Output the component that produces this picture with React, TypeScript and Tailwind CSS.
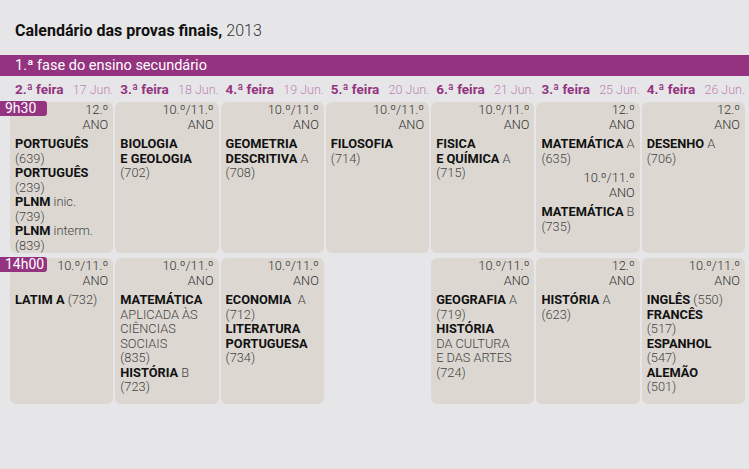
import React from "react"

type Seg = [string, boolean]
type Block = { year: string; lines: Seg[][] }
type Card = Block[] | null

const B = (t: string): Seg => [t, true]
const L = (t: string): Seg => [t, false]

const days = [
  ["2.ª feira", "17 Jun."],
  ["3.ª feira", "18 Jun."],
  ["4.ª feira", "19 Jun."],
  ["5.ª feira", "20 Jun."],
  ["6.ª feira", "21 Jun."],
  ["3.ª feira", "25 Jun."],
  ["4.ª feira", "26 Jun."],
]

const morning: Card[] = [
  [
    {
      year: "12.º",
      lines: [
        [B("PORTUGUÊS")],
        [L("(639)")],
        [B("PORTUGUÊS")],
        [L("(239)")],
        [B("PLNM"), L(" inic.")],
        [L("(739)")],
        [B("PLNM"), L(" interm.")],
        [L("(839)")],
      ],
    },
  ],
  [{ year: "10.º/11.º", lines: [[B("BIOLOGIA")], [B("E GEOLOGIA")], [L("(702)")]] }],
  [{ year: "10.º/11.º", lines: [[B("GEOMETRIA")], [B("DESCRITIVA"), L(" A")], [L("(708)")]] }],
  [{ year: "10.º/11.º", lines: [[B("FILOSOFIA")], [L("(714)")]] }],
  [{ year: "10.º/11.º", lines: [[B("FISICA")], [B("E QUÍMICA"), L(" A")], [L("(715)")]] }],
  [
    { year: "12.º", lines: [[B("MATEMÁTICA"), L(" A")], [L("(635)")]] },
    { year: "10.º/11.º", lines: [[B("MATEMÁTICA"), L(" B")], [L("(735)")]] },
  ],
  [{ year: "12.º", lines: [[B("DESENHO"), L(" A")], [L("(706)")]] }],
]

const afternoon: Card[] = [
  [{ year: "10.º/11.º", lines: [[B("LATIM A"), L(" (732)")]] }],
  [
    {
      year: "10.º/11.º",
      lines: [
        [B("MATEMÁTICA")],
        [L("APLICADA ÀS")],
        [L("CIÊNCIAS")],
        [L("SOCIAIS")],
        [L("(835)")],
        [B("HISTÓRIA"), L(" B")],
        [L("(723)")],
      ],
    },
  ],
  [
    {
      year: "10.º/11.º",
      lines: [[B("ECONOMIA"), L("\u00a0 A")], [L("(712)")], [B("LITERATURA")], [B("PORTUGUESA")], [L("(734)")]],
    },
  ],
  null,
  [
    {
      year: "10.º/11.º",
      lines: [
        [B("GEOGRAFIA"), L(" A")],
        [L("(719)")],
        [B("HISTÓRIA")],
        [L("DA CULTURA")],
        [L("E DAS ARTES")],
        [L("(724)")],
      ],
    },
  ],
  [{ year: "12.º", lines: [[B("HISTÓRIA"), L(" A")], [L("(623)")]] }],
  [
    {
      year: "10.º/11.º",
      lines: [
        [B("INGLÊS"), L(" (550)")],
        [B("FRANCÊS")],
        [L("(517)")],
        [B("ESPANHOL")],
        [L("(547)")],
        [B("ALEMÃO")],
        [L("(501)")],
      ],
    },
  ],
]

const ExamCard = ({ card }: { card: Card }) => {
  if (!card) return <div />
  return (
    <div className="rounded-[6px] bg-[#dcd8d1] px-[5px] pt-px text-[12.8px] leading-[14.5px]">
      {card.map((block, i) => (
        <div key={i} className={i > 0 ? "mt-[5px]" : ""}>
          <div className="text-right font-light text-[#333]">
            {block.year}
            <br />
            ANO
          </div>
          <div className="mt-[5px]">
            {block.lines.map((line, j) => (
              <div key={j} className="whitespace-pre">
                {line.map(([t, bold], k) => (
                  <span key={k} className={bold ? "font-bold text-[#111]" : "font-light text-[#444]"}>
                    {t}
                  </span>
                ))}
              </div>
            ))}
          </div>
        </div>
      ))}
    </div>
  )
}

const Session = ({ time, cards, height }: { time: string; cards: Card[]; height: string }) => (
  <div className="relative pl-[10px] pr-[4px]">
    <div className={`grid grid-cols-7 gap-[2px] ${height}`}>
      {cards.map((c, i) => (
        <ExamCard key={i} card={c} />
      ))}
    </div>
    <div className="absolute left-0 top-[-1px] h-[15px] w-[47px] rounded-r-[3px] bg-[#94337f] pl-[5px] text-[14px] leading-[15px] text-white">
      {time}
    </div>
  </div>
)

export default function App() {
  return (
    <div className="h-[469px] w-[749px] overflow-hidden bg-[#e6e6e8] font-['Roboto',sans-serif] text-[#111]">
      <div className="flex h-[55px] items-center px-[15px] pt-[6px] text-[16px] text-[#111]">
        <span className="font-bold">Calendário das provas finais,</span>
        <span className="ml-[4px] font-light text-[#333]">2013</span>
      </div>
      <div className="flex h-[21px] items-center bg-[#94337f] px-[15px] text-[14.5px] text-white">
        1.ª fase do ensino secundário
      </div>
      <div className="grid h-[26px] grid-cols-7 items-center gap-[2px] pl-[10px] pr-[4px] pt-[1px]">
        {days.map(([d, date], i) => (
          <div key={i} className="flex items-baseline justify-between pl-[5px]">
            <span className="text-[13.5px] font-bold text-[#94337f]">{d}</span>
            <span className="text-[12.5px] font-light text-[#bf83b3]">{date}</span>
          </div>
        ))}
      </div>
      <Session time="9h30" cards={morning} height="h-[151px]" />
      <div className="h-[5px]" />
      <Session time="14h00" cards={afternoon} height="h-[146px]" />
    </div>
  )
}
